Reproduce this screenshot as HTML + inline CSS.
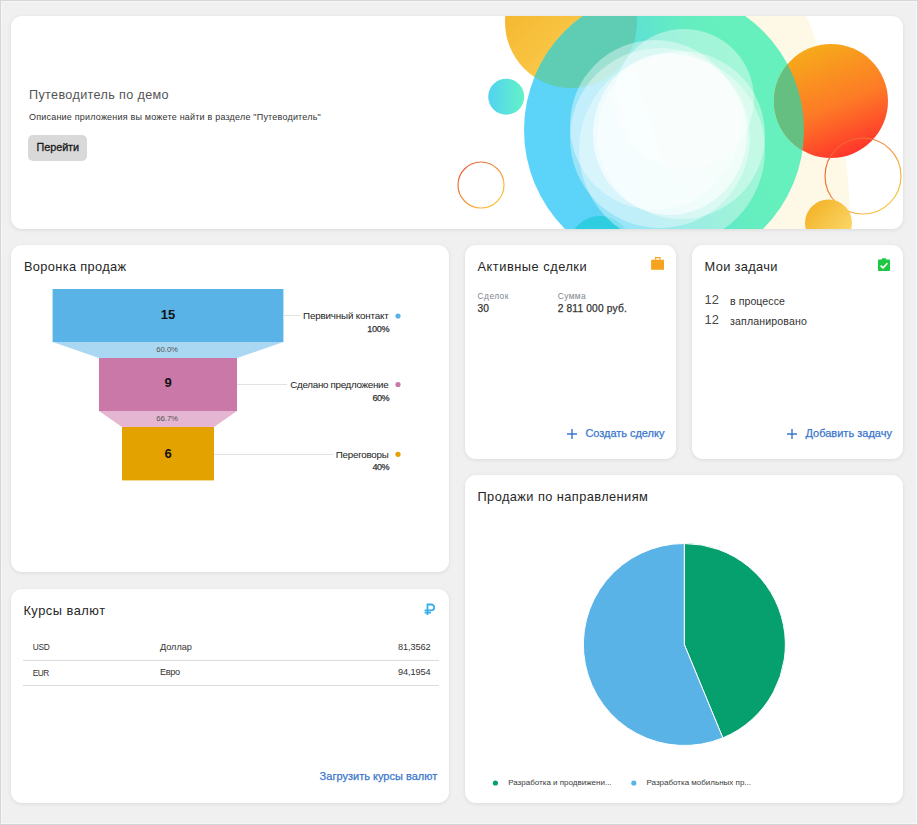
<!DOCTYPE html>
<html><head><meta charset="utf-8"><style>
html,body{margin:0;padding:0;}
body{width:918px;height:825px;position:relative;overflow:hidden;background:#f0f0f0;font-family:"Liberation Sans", sans-serif;}
.frame{position:absolute;left:0;top:0;width:916px;height:823px;border:1px solid #d6d6d6;box-shadow:inset 0 0 0 1px #f6f6f6;}
.card{position:absolute;background:#fff;border-radius:11px;box-shadow:0 1px 4px rgba(0,0,0,0.09);}
.t{position:absolute;white-space:nowrap;line-height:1;}
svg{overflow:visible}
</style></head><body>
<div class="frame"></div>
<div class="card" style="left:11px;top:16px;width:892px;height:213px;"></div>
<div class="card" style="left:11px;top:245px;width:438px;height:327px;"></div>
<div class="card" style="left:11px;top:589px;width:438px;height:214px;"></div>
<div class="card" style="left:465px;top:245px;width:211px;height:214px;"></div>
<div class="card" style="left:692px;top:245px;width:211px;height:214px;"></div>
<div class="card" style="left:465px;top:475px;width:438px;height:328px;"></div>

<div style="position:absolute;left:11px;top:16px;width:892px;height:213px;border-radius:11px;overflow:hidden;">
<svg width="918" height="825" viewBox="0 0 918 825" style="position:absolute;left:-11px;top:-16px">
<defs>
<linearGradient id="gy" x1="0" y1="0" x2="1" y2="1"><stop offset="0" stop-color="#f3af22"/><stop offset="1" stop-color="#fdd862"/></linearGradient>
<linearGradient id="gring" x1="0.15" y1="0.6" x2="0.8" y2="0.4"><stop offset="0" stop-color="#5cd3f8"/><stop offset="0.25" stop-color="#5cd5f2"/><stop offset="0.55" stop-color="#5fe2d2"/><stop offset="0.8" stop-color="#64edc0"/><stop offset="1" stop-color="#66f0bd"/></linearGradient>
<linearGradient id="gcy" x1="0" y1="0" x2="1" y2="0"><stop offset="0" stop-color="#52d2f2"/><stop offset="1" stop-color="#62f2c6"/></linearGradient>
<linearGradient id="gor" x1="0.3" y1="0" x2="0.7" y2="1"><stop offset="0" stop-color="#f6ad1a"/><stop offset="0.55" stop-color="#fd7a26"/><stop offset="1" stop-color="#ff2f2c"/></linearGradient>
<linearGradient id="gol" x1="0" y1="0" x2="1" y2="1"><stop offset="0" stop-color="#ee4f36"/><stop offset="1" stop-color="#f9d842"/></linearGradient>
<linearGradient id="gy2" x1="0" y1="0" x2="1" y2="1"><stop offset="0" stop-color="#f2ad1c"/><stop offset="1" stop-color="#fde07a"/></linearGradient>
<clipPath id="cring"><circle cx="664" cy="130" r="140"/></clipPath>
</defs>
<clipPath id="ccream"><rect x="720" y="0" width="200" height="300"/></clipPath><circle cx="330" cy="225" r="520" fill="#fef8e6" clip-path="url(#ccream)"/>
<circle cx="571" cy="22" r="66" fill="url(#gy)"/>
<circle cx="664" cy="130" r="140" fill="url(#gring)"/>
<g clip-path="url(#cring)">
  <circle cx="571" cy="22" r="66" fill="#5ecdb4"/>
</g>
<circle cx="506.2" cy="96.7" r="18" fill="url(#gcy)"/>
<circle cx="831" cy="101" r="57" fill="url(#gor)"/>
<g clip-path="url(#cring)">
  <circle cx="831" cy="101" r="57" fill="#64bf80"/>
</g>
<circle cx="600" cy="247" r="31" fill="#2fcde0"/>
<g fill="#ffffff">
  <circle cx="655" cy="125" r="85" fill-opacity="0.4"/>
  <circle cx="684" cy="99" r="70" fill-opacity="0.4"/>
  <circle cx="660" cy="138" r="90" fill-opacity="0.38"/>
  <circle cx="681" cy="135" r="84" fill-opacity="0.38"/>
  <ellipse cx="672" cy="150" rx="93" ry="95" fill-opacity="0.38"/>
  <ellipse cx="670" cy="134" rx="77" ry="81" fill-opacity="0.6"/>
</g>
<circle cx="863" cy="176" r="38" fill="none" stroke="url(#gol)" stroke-width="1.2"/>
<circle cx="828.5" cy="223" r="23.5" fill="url(#gy2)"/>
<circle cx="481" cy="185" r="23" fill="none" stroke="url(#gol)" stroke-width="1.2"/>
</svg>
</div>

<div class="t" style="left:29px;top:88.53px;font-size:12.60px;color:#545454;font-weight:400;letter-spacing:0.367px;">Путеводитель по демо</div>
<div class="t" style="left:29px;top:113.28px;font-size:9.00px;color:#333;font-weight:400;letter-spacing:0.202px;">Описание приложения вы можете найти в разделе &quot;Путеводитель&quot;</div>
<div style="position:absolute;left:28px;top:135px;width:59px;height:25.5px;border-radius:5px;background:#d9d9d9"></div>
<div class="t" style="left:-142.22815401785712px;width:400px;text-align:center;top:141.75px;font-size:10.80px;color:#1a1a1a;font-weight:400;letter-spacing:-0.056px;-webkit-text-stroke:0.3px currentColor;">Перейти</div>
<div class="t" style="left:23.9px;top:261.16px;font-size:12.80px;color:#262626;font-weight:400;letter-spacing:0.360px;">Воронка продаж</div>

<svg width="918" height="825" style="position:absolute;left:0;top:0">
<rect x="52.6" y="289" width="230.8" height="53" fill="#5ab3e7"/>
<polygon points="52.6,342 283.4,342 237,358 99,358" fill="#aad8f3"/>
<rect x="99" y="358" width="138" height="53" fill="#c978a8"/>
<polygon points="99,411 237,411 214,427 122,427" fill="#e4b6d2"/>
<rect x="122" y="427" width="92" height="53.4" fill="#e4a200"/>
<g stroke="#e2e2e2" stroke-width="1">
<line x1="283.4" y1="315.5" x2="300" y2="315.5"/>
<line x1="237" y1="384.5" x2="287" y2="384.5"/>
<line x1="214" y1="454.5" x2="333" y2="454.5"/>
</g>
<circle cx="398" cy="316" r="2.6" fill="#5ab3e7"/>
<circle cx="398" cy="384.5" r="2.6" fill="#c978a8"/>
<circle cx="398" cy="454.3" r="2.6" fill="#e4a200"/>
</svg>

<div class="t" style="left:-32.0px;width:400px;text-align:center;top:308.49px;font-size:13.00px;color:#111;font-weight:700;">15</div>
<div class="t" style="left:-32.0px;width:400px;text-align:center;top:376.39px;font-size:13.00px;color:#111;font-weight:700;">9</div>
<div class="t" style="left:-32.0px;width:400px;text-align:center;top:446.79px;font-size:13.00px;color:#111;font-weight:700;">6</div>
<div class="t" style="left:-32.85165343750001px;width:400px;text-align:center;top:346.39px;font-size:7.80px;color:#555;font-weight:400;letter-spacing:-0.103px;">60.0%</div>
<div class="t" style="left:-32.85165343750001px;width:400px;text-align:center;top:415.19px;font-size:7.80px;color:#555;font-weight:400;letter-spacing:-0.103px;">66.7%</div>
<div class="t" style="right:529.4681371323529px;top:310.90px;font-size:9.80px;color:#222;font-weight:400;letter-spacing:-0.168px;">Первичный контакт</div>
<div class="t" style="right:528.868596875px;top:325.09px;font-size:9.10px;color:#333;font-weight:400;letter-spacing:-0.369px;-webkit-text-stroke:0.25px currentColor;">100%</div>
<div class="t" style="right:529.6050486842105px;top:380.00px;font-size:9.80px;color:#222;font-weight:400;letter-spacing:-0.305px;">Сделано предложение</div>
<div class="t" style="right:529.071121875px;top:393.99px;font-size:9.10px;color:#333;font-weight:400;letter-spacing:-0.571px;-webkit-text-stroke:0.25px currentColor;">60%</div>
<div class="t" style="right:529.5644896875px;top:449.70px;font-size:9.80px;color:#222;font-weight:400;letter-spacing:-0.264px;">Переговоры</div>
<div class="t" style="right:529.071121875px;top:462.99px;font-size:9.10px;color:#333;font-weight:400;letter-spacing:-0.571px;-webkit-text-stroke:0.25px currentColor;">40%</div>
<div class="t" style="left:23.4px;top:605.26px;font-size:12.80px;color:#262626;font-weight:400;letter-spacing:0.526px;">Курсы валют</div>
<svg width="14" height="14" style="position:absolute;left:423px;top:602px" viewBox="0 0 14 14"><g fill="none" stroke="#36aeea" stroke-width="1.8"><path d="M4.5 13 V2.5 H8.3 A2.9 2.9 0 0 1 8.3 8.3 H1.6"/><path d="M1.6 10.6 H8"/></g></svg>
<div class="t" style="left:32.8px;top:643.27px;font-size:8.30px;color:#333;font-weight:400;letter-spacing:-0.275px;">USD</div>
<div class="t" style="left:159.9px;top:642.51px;font-size:9.20px;color:#333;font-weight:400;letter-spacing:-0.020px;">Доллар</div>
<div class="t" style="right:487.37940625px;top:642.51px;font-size:9.20px;color:#333;font-weight:400;letter-spacing:-0.079px;">81,3562</div>
<div style="position:absolute;left:23px;top:660px;width:416px;height:1px;background:#dcdcdc"></div>
<div class="t" style="left:32.8px;top:669.17px;font-size:8.30px;color:#333;font-weight:400;letter-spacing:-0.475px;">EUR</div>
<div class="t" style="left:159.9px;top:668.41px;font-size:9.20px;color:#333;font-weight:400;letter-spacing:-0.314px;">Евро</div>
<div class="t" style="right:487.37940625px;top:668.41px;font-size:9.20px;color:#333;font-weight:400;letter-spacing:-0.079px;">94,1954</div>
<div style="position:absolute;left:23px;top:685px;width:416px;height:1px;background:#dcdcdc"></div>
<div class="t" style="right:480.6893764880952px;top:771.38px;font-size:11.00px;color:#3a77cc;font-weight:400;letter-spacing:0.011px;-webkit-text-stroke:0.25px currentColor;">Загрузить курсы валют</div>
<div class="t" style="left:477.5px;top:260.96px;font-size:12.80px;color:#262626;font-weight:400;letter-spacing:0.525px;">Активные сделки</div>
<svg width="16" height="14" style="position:absolute;left:650px;top:256px" viewBox="0 0 16 14"><path d="M5.6 3.8 V1.7 H10.0 V3.8" fill="none" stroke="#f6a21c" stroke-width="1.2"/><rect x="1.1" y="3.8" width="12.9" height="10" rx="0.6" fill="#f6a21c"/><rect x="1.1" y="6.6" width="12.9" height="0.5" fill="#f9b545" opacity="0.6"/></svg>
<div class="t" style="left:477.6px;top:292.19px;font-size:8.40px;color:#80868e;font-weight:400;letter-spacing:0.433px;">Сделок</div>
<div class="t" style="left:477.6px;top:303.86px;font-size:10.20px;color:#333;font-weight:400;letter-spacing:0.077px;-webkit-text-stroke:0.25px currentColor;">30</div>
<div class="t" style="left:557.7px;top:292.19px;font-size:8.40px;color:#80868e;font-weight:400;letter-spacing:0.401px;">Сумма</div>
<div class="t" style="left:557.7px;top:303.86px;font-size:10.20px;color:#333;font-weight:400;letter-spacing:0.171px;-webkit-text-stroke:0.25px currentColor;">2 811 000 руб.</div>
<svg width="12" height="12" style="position:absolute;left:566px;top:428px" viewBox="0 0 12 12"><path d="M6 1 V11 M1 6 H11" stroke="#3a77cc" stroke-width="1.4"/></svg>
<div class="t" style="right:253.62752008928572px;top:428.18px;font-size:11.00px;color:#3a77cc;font-weight:400;letter-spacing:-0.028px;-webkit-text-stroke:0.25px currentColor;">Создать сделку</div>
<div class="t" style="left:704.5px;top:260.96px;font-size:12.80px;color:#262626;font-weight:400;letter-spacing:0.356px;">Мои задачи</div>
<svg width="14" height="14" style="position:absolute;left:877px;top:258px" viewBox="0 0 14 14"><rect x="1" y="1.4" width="12" height="11.6" rx="0.8" fill="#1ec844"/><rect x="4.8" y="0.3" width="4.4" height="2" rx="0.8" fill="#1ec844"/><path d="M3.6 7.6 L6 9.9 L10.4 5.2" fill="none" stroke="#fff" stroke-width="1.6"/></svg>
<div class="t" style="left:704.5px;top:293.97px;font-size:12.90px;color:#4a4a4a;font-weight:400;letter-spacing:-0.024px;">12</div>
<div class="t" style="left:730px;top:295.92px;font-size:10.60px;color:#333;font-weight:400;letter-spacing:0.055px;">в процессе</div>
<div class="t" style="left:704.5px;top:314.37px;font-size:12.90px;color:#4a4a4a;font-weight:400;letter-spacing:-0.024px;">12</div>
<div class="t" style="left:730px;top:316.32px;font-size:10.60px;color:#333;font-weight:400;letter-spacing:0.131px;">запланировано</div>
<svg width="12" height="12" style="position:absolute;left:786px;top:428px" viewBox="0 0 12 12"><path d="M6 1 V11 M1 6 H11" stroke="#3a77cc" stroke-width="1.4"/></svg>
<div class="t" style="right:25.98379166666667px;top:428.18px;font-size:11.00px;color:#3a77cc;font-weight:400;letter-spacing:0.016px;-webkit-text-stroke:0.25px currentColor;">Добавить задачу</div>
<div class="t" style="left:477.5px;top:490.56px;font-size:12.80px;color:#262626;font-weight:400;letter-spacing:0.425px;">Продажи по направлениям</div>

<svg width="918" height="825" style="position:absolute;left:0;top:0">
<path d="M684.3 644.5 L684.3 543.5 A101 101 0 0 1 722.8 737.9 Z" fill="#06a06e" stroke="#fff" stroke-width="1"/>
<path d="M684.3 644.5 L722.8 737.9 A101 101 0 1 1 684.3 543.5 Z" fill="#5ab3e7" stroke="#fff" stroke-width="1"/>
<circle cx="495.4" cy="783" r="2.6" fill="#06a06e"/>
<circle cx="633.8" cy="783" r="2.6" fill="#5ab3e7"/>
</svg>

<div class="t" style="left:508.2px;top:778.52px;font-size:8.00px;color:#3a3a3a;font-weight:400;letter-spacing:0.002px;">Разработка и продвижени...</div>
<div class="t" style="left:646.5px;top:778.52px;font-size:8.00px;color:#3a3a3a;font-weight:400;letter-spacing:-0.002px;">Разработка мобильных пр...</div>
</body></html>
